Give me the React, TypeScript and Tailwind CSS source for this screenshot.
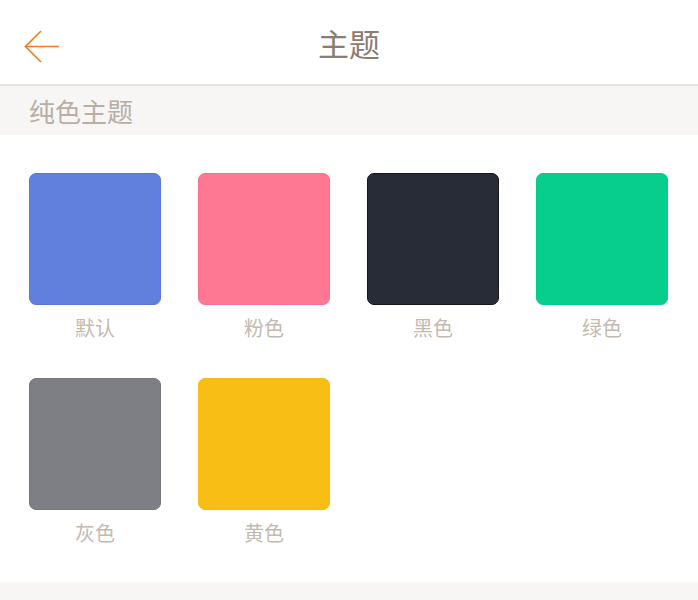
export default function App() {
  const themes = [
    { name: "默认", color: "bg-[#6180de]", border: "border-[#5a7ada]" },
    { name: "粉色", color: "bg-[#fe7894]", border: "border-[#fa7090]" },
    { name: "黑色", color: "bg-[#272c37]", border: "border-[#14161c]" },
    { name: "绿色", color: "bg-[#07cd8d]", border: "border-[#0ac98b]" },
    { name: "灰色", color: "bg-[#7e7f84]", border: "border-[#76777c]" },
    { name: "黄色", color: "bg-[#f8be15]", border: "border-[#f6bb18]" },
  ];

  return (
    <div className="min-h-[600px] bg-white font-['Noto_Sans_CJK_SC',sans-serif]">
      <header className="relative flex h-[86px] items-center justify-center border-b-2 border-[#e6e3e0] bg-white">
        <button className="absolute left-[24px] top-[30px]">
          <svg width="36" height="34" viewBox="0 0 36 34" fill="none" stroke="#f47a20" strokeWidth="1.6">
            <path d="M35 16.5H2" />
            <path d="M17 1L1.5 16.5L17 32" />
          </svg>
        </button>
        <h1 className="text-[31px] leading-none text-[#8b7b70]">主题</h1>
      </header>

      <div className="flex h-[49px] items-center bg-[#f7f6f4] px-[29px]">
        <span className="text-[26px] leading-none text-[#b9aea6]">纯色主题</span>
      </div>

      <ul className="grid grid-cols-[repeat(4,132px)] gap-x-[37px] gap-y-[32px] pl-[29px] pt-[38px] pb-[31px]">
        {themes.map((t) => (
          <li key={t.name} className="flex flex-col items-center">
            <div className={`h-[132px] w-[132px] rounded-[7px] border ${t.color} ${t.border}`} />
            <span className="mt-[5px] text-[20px] leading-[36px] text-[#c4b9b1]">{t.name}</span>
          </li>
        ))}
      </ul>

      <div className="h-[18px] bg-[#f7f6f4]" />
    </div>
  );
}
